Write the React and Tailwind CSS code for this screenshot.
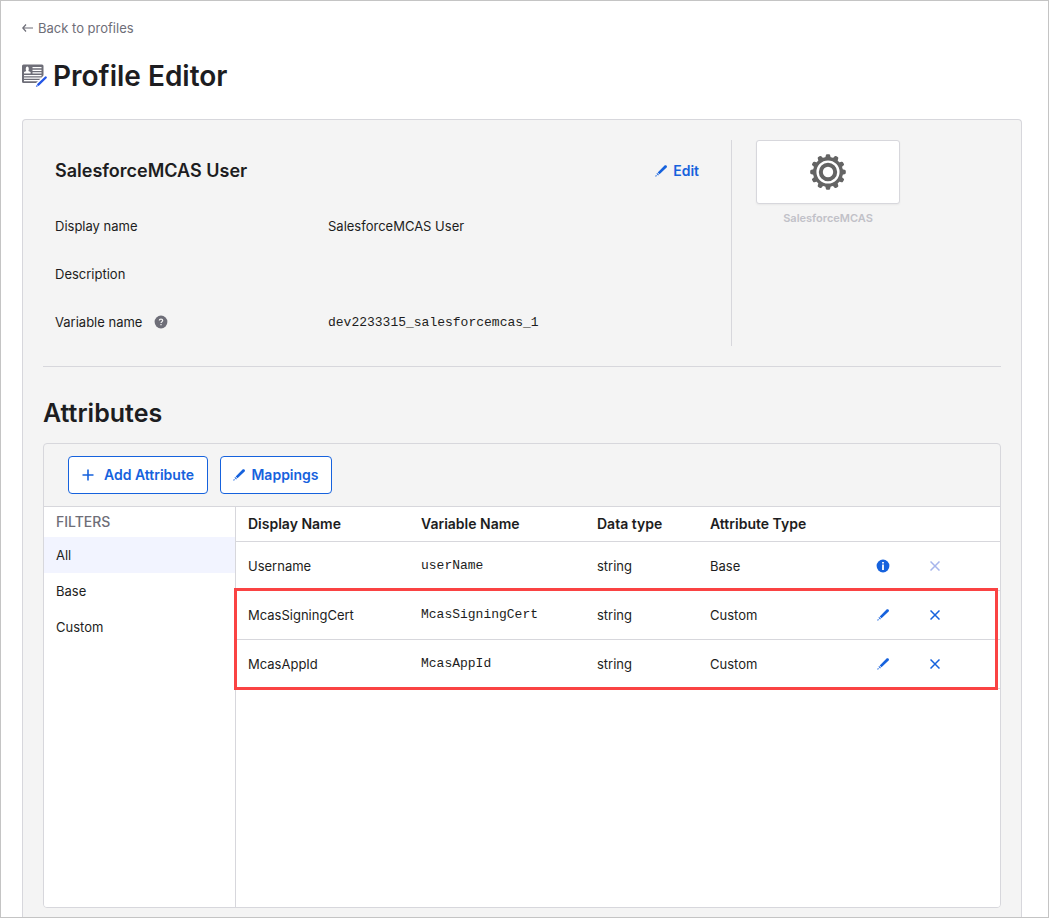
import React from "react";

const Pencil = ({ className = "" }) => (
  <svg viewBox="0 0 12 12" className={`h-3 w-3 shrink-0 fill-current ${className}`} aria-hidden="true">
    <path d="M9.8 0.2h1.200l.9.9v1.100L4.500 9.200 2.700 7.400zM2.100 8l1.800 1.800-.8.6-1.600-1.600zM0.300 11l.7-1.100.9.9-.7.8H.3z" />
  </svg>
);

const Cross = ({ className = "" }) => (
  <svg viewBox="0 0 10 10" className={`h-[10px] w-[10px] stroke-current ${className}`} aria-hidden="true">
    <path d="M.5.5l9 9M9.5.5l-9 9" strokeWidth="1.500" fill="none" />
  </svg>
);

const Plus = () => (
  <svg viewBox="0 0 12 12" className="h-3 w-3 stroke-current" aria-hidden="true">
    <path d="M6 .5v11M.5 6h11" strokeWidth="1.600" fill="none" />
  </svg>
);

const BackArrow = () => (
  <svg viewBox="0 0 12 10" className="h-[10px] w-3 stroke-current" aria-hidden="true">
    <path d="M11 5H.8M4 1.500L.8 5 4 8.500" strokeWidth="1.200" fill="none" />
  </svg>
);

const Info = () => (
  <svg viewBox="0 0 14 14" className="h-[14px] w-[14px]" aria-hidden="true">
    <circle cx="7" cy="7" r="6.400" fill="#1662dd" />
    <path d="M6.100 3h1.800v1.600H6.100zM6.100 5.600h1.800V11H6.100z" fill="#fff" />
  </svg>
);

const Help = () => (
  <svg viewBox="0 0 14 14" className="h-[14px] w-[14px]" aria-hidden="true">
    <circle cx="7" cy="7" r="6.400" fill="#6e6e78" />
    <path d="M5.300 5.600c0-2.100 3.400-2.100 3.400 0C8.700 6.700 7 6.700 7 8.100" fill="none" stroke="#f4f4f4" strokeWidth="1.200" />
    <path d="M6.400 9h1.200v1.300H6.400z" fill="#f4f4f4" />
  </svg>
);

const ProfileIcon = () => (
  <svg viewBox="0 0 26 24" className="h-6 w-[26px] shrink-0" aria-hidden="true">
    <rect x="0" y="0.500" width="21.500" height="18.500" rx="1.500" fill="#6e6e78" />
    <path d="M2 11h17.500v1.200H2zM2 13.500h17.500v1.200H2zM2 16h16v1.200H2zM10.500 3h9v1.200h-9zM10.500 5.700h9v1.200h-9zM10.500 8.300h9v1.200h-9z" fill="#fff" />
    <path d="M2 9.500V8l2.300-.9C3.500 6 3.500 2.500 5.300 2.500s1.800 3.500 1 4.600L8.600 8v1.500z" fill="#fff" />
    <path d="M12.500 24.500L25 12" stroke="#fff" strokeWidth="5.500" />
    <path d="M16.300 20.700l7.400-7.200" stroke="#2457e6" strokeWidth="2.400" strokeLinecap="round" />
    <path d="M13.900 22.900l.7-1.900 1.300 1.300z" fill="#2457e6" />
  </svg>
);

const teeth = [0, 30, 60, 90, 120, 150, 180, 210, 240, 270, 300, 330];

const Gear = () => (
  <svg viewBox="-18 -18 36 36" className="h-9 w-9" aria-hidden="true">
    <g fill="#646464">
      {teeth.map((a) => (
        <path key={a} d="M-3-13L-2.200-16.600Q-2-17.800-1-17.800H1Q2-17.800 2.200-16.600L3-13z" transform={`rotate(${a})`} />
      ))}
      <circle r="15" />
    </g>
    <circle r="10.400" fill="none" stroke="#fff" strokeWidth="2.400" />
    <circle r="5.200" fill="#fff" />
  </svg>
);

const rows = [
  { name: "Username", variable: "userName", type: "string", kind: "Base" },
  { name: "McasSigningCert", variable: "McasSigningCert", type: "string", kind: "Custom" },
  { name: "McasAppId", variable: "McasAppId", type: "string", kind: "Custom" },
];

const Detail = ({ label, help, children }) => (
  <div className="flex h-12 items-center">
    <dt className="flex w-[273px] items-center gap-3">
      {label}
      {help && <Help />}
    </dt>
    <dd>{children}</dd>
  </div>
);

export default function App() {
  return (
    <div className="flex min-h-screen flex-col border border-[#c4c4c4] bg-white pl-[21px] pr-[26px] font-['Inter',sans-serif] text-[13px] leading-5 text-[#1d1d21]">
      <header className="flex flex-col items-start pt-[17px]">
        <a href="#profiles" className="flex items-center gap-1 text-[#6e6e78]">
          <BackArrow />
          Back to profiles
        </a>
        <div className="mt-5 flex items-center gap-[5px]">
          <ProfileIcon />
          <h1 className="text-[28px] leading-9 font-semibold">Profile Editor</h1>
        </div>
      </header>

      <main className="mt-[25px] flex flex-1 flex-col rounded-t border border-b-0 border-[#d7d7dc] bg-[#f4f4f4] px-5 pt-5 pb-[9px]">
        <section className="flex border-b border-[#d7d7dc] pb-5">
          <div className="h-[206px] w-[689px] border-r border-[#d7d7dc] pr-8 pl-3">
            <div className="flex h-[62px] items-center justify-between">
              <h2 className="text-[18px] leading-6 font-semibold">SalesforceMCAS User</h2>
              <button type="button" className="flex items-center gap-[6px] text-sm font-semibold text-[#1662dd]">
                <Pencil />
                Edit
              </button>
            </div>
            <dl>
              <Detail label="Display name">SalesforceMCAS User</Detail>
              <Detail label="Description" />
              <Detail label="Variable name" help>
                <span className="font-['Liberation_Mono',monospace]">dev2233315_salesforcemcas_1</span>
              </Detail>
            </dl>
          </div>
          <figure className="ml-6 flex w-36 flex-col">
            <div className="flex h-16 items-center justify-center rounded-[3px] border border-[#d7d7dc] bg-white shadow-xs">
              <Gear />
            </div>
            <figcaption className="mt-1 text-center text-[11px] font-semibold text-[#c1c1c8]">SalesforceMCAS</figcaption>
          </figure>
        </section>

        <h2 className="mt-7 text-[25px] leading-9 font-semibold">Attributes</h2>

        <section className="mt-3 flex flex-1 flex-col overflow-hidden rounded border border-[#d7d7dc]">
          <div className="flex gap-3 border-b border-[#d7d7dc] px-6 py-3">
            <button type="button" className="flex h-[38px] w-[140px] items-center justify-center gap-[10px] rounded border border-[#1662dd] bg-white text-sm font-semibold text-[#1662dd]">
              <Plus />
              Add Attribute
            </button>
            <button type="button" className="flex h-[38px] w-28 items-center justify-center gap-[6px] rounded border border-[#1662dd] bg-white text-sm font-semibold text-[#1662dd]">
              <Pencil />
              Mappings
            </button>
          </div>
          <div className="flex flex-1 bg-white">
            <nav className="w-48 shrink-0 border-r border-[#d7d7dc]">
              <h3 className="px-3 py-[5px] text-sm font-medium text-[#6e6e78]">FILTERS</h3>
              <a href="#all" className="flex h-9 items-center bg-[#f2f4ff] px-3">All</a>
              <a href="#base" className="flex h-9 items-center px-3">Base</a>
              <a href="#custom" className="flex h-9 items-center px-3">Custom</a>
            </nav>
            <div className="relative flex-1">
              <table className="w-full table-fixed text-left">
                <thead>
                  <tr className="h-[34px] border-b border-[#d7d7dc] text-sm">
                    <th className="w-[173px] pl-3 font-semibold">Display Name</th>
                    <th className="w-[176px] pl-3 font-semibold">Variable Name</th>
                    <th className="w-[113px] pl-3 font-semibold">Data type</th>
                    <th className="w-[152px] pl-3 font-semibold">Attribute Type</th>
                    <th className="w-[66px]" aria-label="Edit" />
                    <th aria-label="Remove" />
                  </tr>
                </thead>
                <tbody>
                  {rows.map((row) => {
                    const base = row.kind === "Base";
                    return (
                      <tr key={row.name} className="h-[49px] border-b border-[#d7d7dc]">
                        <td className="pl-3">{row.name}</td>
                        <td className="pl-3 font-['Liberation_Mono',monospace]">{row.variable}</td>
                        <td className="pl-3">{row.type}</td>
                        <td className="pl-3">{row.kind}</td>
                        <td>
                          <button type="button" className="flex w-full justify-center text-[#1662dd]" aria-label={`${base ? "About" : "Edit"} ${row.name}`}>
                            {base ? <Info /> : <Pencil />}
                          </button>
                        </td>
                        <td className="pl-[14px]">
                          <button type="button" disabled={base} className="flex text-[#1662dd] disabled:text-[#a7b5ec]" aria-label={`Remove ${row.name}`}>
                            <Cross />
                          </button>
                        </td>
                      </tr>
                    );
                  })}
                </tbody>
              </table>
              <div className="pointer-events-none absolute top-[81px] right-[2px] -left-[2px] h-[102px] border-3 border-[#fa4343]" />
            </div>
          </div>
        </section>
      </main>
    </div>
  );
}
